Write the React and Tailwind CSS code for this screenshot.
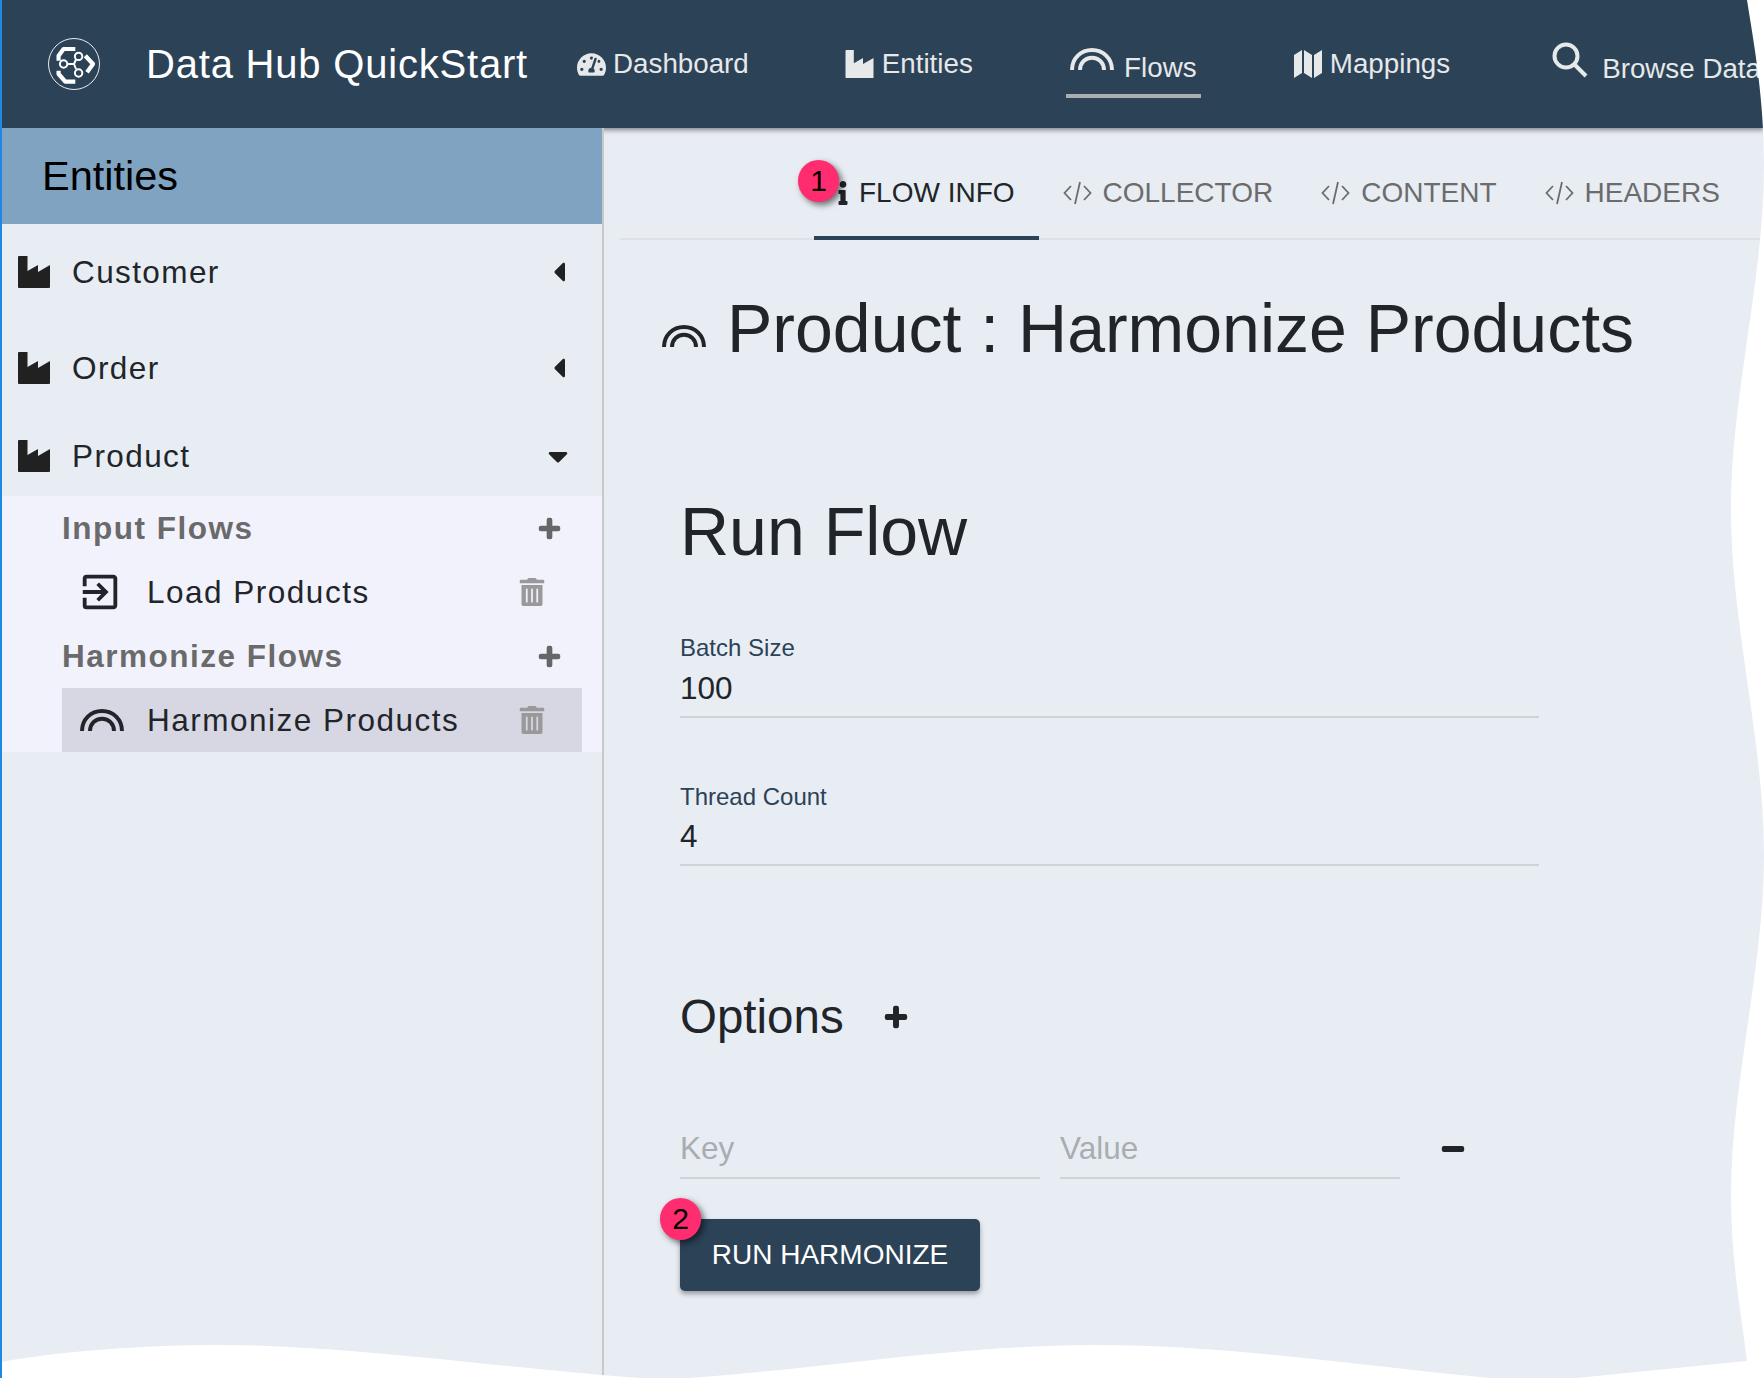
import { FaTachometerAlt, FaInfo, FaPlus, FaMinus, FaTrashAlt, FaCaretLeft, FaCaretDown } from "react-icons/fa";
import { MdExitToApp } from "react-icons/md";

const sans = "font-['Liberation_Sans',Arial,sans-serif]";

function Arcs({ className }) {
  return (
    <svg viewBox="0 0 44 22" fill="none" stroke="currentColor" strokeWidth="4" className={className}>
      <path d="M2 22C2 10.5 10.8 2 22 2S42 10.5 42 22" />
      <path d="M10 22C10 14.8 15.4 9.8 22 9.8S34 14.8 34 22" />
    </svg>
  );
}

function CodeIcon() {
  return (
    <svg viewBox="0 0 29 24" fill="none" stroke="currentColor" strokeWidth="1.8" className="w-[29px] h-[24px]">
      <path d="M8 5 1.5 12 8 19M21 5l6.5 7-6.5 7M17 1l-5 22" />
    </svg>
  );
}

function Factory({ className }) {
  return (
    <svg viewBox="0 0 32 32" fill="currentColor" className={className}>
      <path d="M0 1Q0 0 1 0H9.5V15L20 9V16L32 9V31Q32 32 31 32H1Q0 32 0 31Z" />
    </svg>
  );
}

function MapIcon() {
  return (
    <svg viewBox="0 0 28 28" fill="currentColor" className="w-[28px] h-[28px]">
      <path d="M0 5 8 0V23L0 28ZM10 0 18 5V28L10 23ZM20 5 28 0V23L20 28Z" />
    </svg>
  );
}

function Logo() {
  return (
    <svg viewBox="0 0 52 52" fill="none" stroke="white" className="w-[52px] h-[52px] shrink-0">
      <circle cx="26" cy="26" r="25.5" strokeWidth="0.9" />
      <g strokeWidth="4.2" strokeLinejoin="round">
        <path d="M10.6 22.7V17.7L15.6 11H27.3" />
        <path d="M37.3 17.7 45 26 39 34.3" />
        <path d="M10.6 32.7V36L17.3 43.7H27.3" />
      </g>
      <g strokeWidth="2">
        <path d="M20 26h6l2-4.5M26 26l2 5" />
        <circle cx="30.6" cy="18.4" r="3.7" />
        <circle cx="15.6" cy="26" r="3.7" />
        <circle cx="30.6" cy="35" r="3.7" />
      </g>
    </svg>
  );
}

function Badge({ n, className }) {
  return (
    <div className={`absolute w-[41px] h-[42px] rounded-full bg-[#ff2d70] text-black text-[30px] leading-none flex items-center justify-center shadow-[3px_3px_6px_rgba(0,0,0,0.55)] ${className}`}>
      {n}
    </div>
  );
}

function EntityRow({ name, open, height }) {
  return (
    <div className={`flex items-center pl-4 pr-[27px] ${height}`}>
      <Factory className="w-[32px] h-[32px] text-[#212121] shrink-0" />
      <span className="ml-[22px] mt-[1px] flex-1 text-[31.5px] tracking-[1.4px] text-[#212529]">{name}</span>
      {open ? <FaCaretDown size={32} className="text-[#212121] mr-[1px]" /> : <FaCaretLeft size={32} className="text-[#212121]" />}
    </div>
  );
}

function FlowGroup({ name }) {
  return (
    <div className="h-16 flex items-center justify-between pr-[21px]">
      <span className="mt-[1px] text-[31.5px] font-bold tracking-[1.5px] text-[#6a6a6a]">{name}</span>
      <FaPlus size={23} strokeWidth={30} className="text-[#666]" />
    </div>
  );
}

function FlowRow({ name, icon, active }) {
  return (
    <div className={`h-16 flex items-center pl-[18px] pr-[36px] ${active ? "bg-[#d7d7e3]" : ""}`}>
      <div className="w-[44px] flex justify-center shrink-0">{icon}</div>
      <span className="ml-[23px] mt-[1px] flex-1 text-[31.5px] tracking-[1.5px] text-[#212529]">{name}</span>
      <FaTrashAlt size={28} className="text-[#999]" />
    </div>
  );
}

function Tab({ label, icon, active, children }) {
  return (
    <div className={`relative flex items-center gap-[11px] px-6 pt-[22px] border-b-4 text-[28px] ${active ? "border-[#2c4257] text-[#212529]" : "border-transparent text-[#6c6c6c]"}`}>
      {icon}
      <span>{label}</span>
      {children}
    </div>
  );
}

function Field({ label, value, className, gap }) {
  return (
    <div className={className}>
      <div className="text-[24px] leading-[28px] text-[#2c4257]">{label}</div>
      <div className={`${gap} pb-[10px] border-b-2 border-[#cfd2d6] text-[31.5px] leading-[36px] text-[#212529]`}>{value}</div>
    </div>
  );
}

function NavItem({ label, icon, className }) {
  return (
    <div className={`flex items-center text-[#e6e8ea] text-[27.75px] ${className}`}>
      {icon}
      <span>{label}</span>
    </div>
  );
}

export default function App() {
  return (
    <div className={`relative w-[1764px] h-[1378px] overflow-hidden bg-[#e8edf4] border-l-2 border-[#1e88e5] flex flex-col ${sans}`}>
      <header className="relative z-10 h-[128px] shrink-0 bg-[#2c4257] flex items-center pl-[46px] shadow-[0_2px_5px_rgba(0,0,0,0.45)]">
        <Logo />
        <span className="ml-[46px] text-white text-[40px] tracking-[0.8px] whitespace-nowrap">Data Hub QuickStart</span>
        <NavItem className="ml-[49px] gap-[7px]" label="Dashboard" icon={<FaTachometerAlt size={29} />} />
        <NavItem className="ml-[96px] gap-[8px]" label="Entities" icon={<Factory className="w-[29px] h-[28px]" />} />
        <div className="ml-[93px] h-[128px] pt-[48px]">
          <div className="w-[135px] h-[50px] border-b-4 border-[#a9aeb2] flex items-start justify-center gap-[10px] text-[#e6e8ea] text-[27.75px]">
            <Arcs className="w-[44px] h-[22px]" />
            <span className="-mt-[1px]">Flows</span>
          </div>
        </div>
        <NavItem className="ml-[93px] gap-[8px]" label="Mappings" icon={<MapIcon />} />
        <div className="ml-[102px] mt-[4px] flex items-start text-[#e6e8ea] text-[27.75px] whitespace-nowrap">
          <svg viewBox="0 0 36 36" fill="none" stroke="currentColor" strokeWidth="4" className="w-[36px] h-[36px]">
            <circle cx="14" cy="14" r="11.5" />
            <path d="M22 22 34 34" />
          </svg>
          <span className="ml-[14px] mt-[6px]">Browse Data</span>
        </div>
      </header>

      <div className="flex-1 flex min-h-0">
        <aside className="relative z-20 w-[602px] shrink-0 border-r-2 border-[#c8c9cb] bg-[#e8edf4]">
          <div className="h-[96px] bg-[#7fa3c0] flex items-center pl-10 text-[41.5px] text-black">Entities</div>
          <EntityRow name="Customer" height="h-[96px]" />
          <EntityRow name="Order" height="h-[96px]" />
          <EntityRow name="Product" open height="h-[80px]" />
          <div className="h-[256px] bg-[#f2f2fd] pl-[60px] pr-[20px]">
            <FlowGroup name="Input Flows" />
            <FlowRow name="Load Products" icon={<MdExitToApp size={46} className="text-[#212529] -ml-[4px]" />} />
            <FlowGroup name="Harmonize Flows" />
            <FlowRow name="Harmonize Products" active icon={<Arcs className="w-[44px] h-[22px] text-[#212529]" />} />
          </div>
        </aside>

        <main className="flex-1 min-w-0 text-[#212529]">
          <div className="ml-4 h-[112px] border-b-2 border-[#dfe0e2] flex pl-[194px]">
            <div className="flex h-[112px]">
              <Tab label="FLOW INFO" active icon={<FaInfo size={24} className="w-[10px]" />}>
                <Badge n="1" className="-left-4 top-8" />
              </Tab>
              <Tab label="COLLECTOR" icon={<CodeIcon />} />
              <Tab label="CONTENT" icon={<CodeIcon />} />
              <Tab label="HEADERS" icon={<CodeIcon />} />
            </div>
          </div>

          <div className="mt-[54px] ml-[58px] flex items-center gap-[21px] text-[68px] leading-[68px] whitespace-nowrap">
            <Arcs className="w-[44px] h-[22px] mt-[15px]" />
            <h1>Product : Harmonize Products</h1>
          </div>

          <div className="ml-[76px] w-[859px]">
            <h2 className="mt-[135px] text-[68px] leading-[68px]">Run Flow</h2>
            <Field className="mt-[69px]" gap="mt-[8px]" label="Batch Size" value="100" />
            <Field className="mt-[65px]" gap="mt-[7px]" label="Thread Count" value="4" />

            <div className="mt-[124px] flex items-center gap-[40px] text-[47.5px] leading-[54px]">
              <span>Options</span>
              <FaPlus size={24} strokeWidth={30} />
            </div>

            <div className="mt-[86px] flex items-center text-[31.5px] leading-[36px] text-[#a9adb2]">
              <div className="w-[360px] pb-[11px] border-b-2 border-[#cfd2d6]">Key</div>
              <div className="ml-[20px] w-[340px] pb-[11px] border-b-2 border-[#cfd2d6]">Value</div>
              <FaMinus size={24} strokeWidth={30} className="ml-[41px] -mt-[12px] text-[#212529]" />
            </div>

            <div className="relative mt-[40px] w-[300px] h-[72px] bg-[#2c4257] rounded-[5px] flex items-center justify-center text-white text-[28px] shadow-[0_3px_5px_rgba(0,0,0,0.35)]">
              RUN HARMONIZE
              <Badge n="2" className="-left-5 -top-[21px]" />
            </div>
          </div>
        </main>
      </div>

      {/* torn page edge of the screenshot */}
      <svg viewBox="0 0 1764 1378" className="absolute -left-[2px] top-0 z-30 w-[1764px] h-[1378px] pointer-events-none">
        <path
          fill="#fff"
          d="M0 1362C70 1350 150 1345 219 1345C350 1345 500 1368 640 1378L690 1378C830 1368 960 1345 1095 1345C1230 1345 1360 1366 1490 1378L1577 1378L1747 1361C1742 1320 1731 1260 1731 1197C1731 1083 1764 969 1764 855C1764 741 1731 624 1731 510C1731 396 1764 280 1764 165C1764 100 1755 50 1747 0L1764 0L1764 1378L0 1378Z"
        />
      </svg>
    </div>
  );
}
